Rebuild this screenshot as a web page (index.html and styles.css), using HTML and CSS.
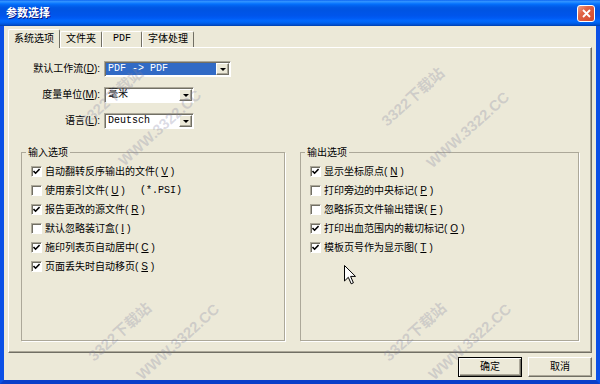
FILE: index.html
```html
<!DOCTYPE html>
<html lang="zh">
<head>
    <meta charset="UTF-8">
    <title>参数选择</title>
    <link rel="stylesheet" href="styles.css">
</head>
<body>
    <div class="window">
        <div class="titlebar">
            <span class="title">参数选择</span>
            <button class="close" title="关闭">
                <svg width="9" height="9" viewBox="0 0 9 9"><path d="M1 1 L8 8 M8 1 L1 8" stroke="#fff" stroke-width="1.8" fill="none"/></svg>
            </button>
        </div>

        <div class="frame">
            <div class="tabs">
                <div class="tab active">系统选项</div>
                <div class="tab">文件夹</div>
                <div class="tab mono">PDF</div>
                <div class="tab">字体处理</div>
            </div>

            <div class="panel">
                <div class="form">
                    <label>默认工作流(<u>D</u>):</label>
                    <div class="combo wide">
                        <span class="value selected">PDF -&gt; PDF</span>
                        <span class="drop"></span>
                    </div>

                    <label>度量单位(<u>M</u>):</label>
                    <div class="combo">
                        <span class="value">毫米</span>
                        <span class="drop"></span>
                    </div>

                    <label>语言(<u>L</u>):</label>
                    <div class="combo">
                        <span class="value">Deutsch</span>
                        <span class="drop"></span>
                    </div>
                </div>

                <div class="groups">
                    <fieldset class="group">
                        <legend>输入选项</legend>
                        <div class="check"><span class="box"><svg width="7" height="7" viewBox="0 0 7 7"><path d="M0.5 3 L2.6 5.2 L6.6 1" stroke="#000" stroke-width="1.6" fill="none"/></svg></span>自动翻转反序输出的文件(<u>V</u>)</div>
                        <div class="check"><span class="box"></span>使用索引文件(<u>U</u>)<span class="mono">&nbsp; (*.PSI)</span></div>
                        <div class="check"><span class="box"><svg width="7" height="7" viewBox="0 0 7 7"><path d="M0.5 3 L2.6 5.2 L6.6 1" stroke="#000" stroke-width="1.6" fill="none"/></svg></span>报告更改的源文件(<u>R</u>)</div>
                        <div class="check"><span class="box"></span>默认忽略装订盒(<u>I</u>)</div>
                        <div class="check"><span class="box"><svg width="7" height="7" viewBox="0 0 7 7"><path d="M0.5 3 L2.6 5.2 L6.6 1" stroke="#000" stroke-width="1.6" fill="none"/></svg></span>施印列表页自动居中(<u>C</u>)</div>
                        <div class="check"><span class="box"><svg width="7" height="7" viewBox="0 0 7 7"><path d="M0.5 3 L2.6 5.2 L6.6 1" stroke="#000" stroke-width="1.6" fill="none"/></svg></span>页面丢失时自动移页(<u>S</u>)</div>
                    </fieldset>

                    <fieldset class="group">
                        <legend>输出选项</legend>
                        <div class="check"><span class="box"><svg width="7" height="7" viewBox="0 0 7 7"><path d="M0.5 3 L2.6 5.2 L6.6 1" stroke="#000" stroke-width="1.6" fill="none"/></svg></span>显示坐标原点(<u>N</u>)</div>
                        <div class="check"><span class="box"></span>打印旁边的中央标记(<u>P</u>)</div>
                        <div class="check"><span class="box"></span>忽略拆页文件输出错误(<u>F</u>)</div>
                        <div class="check"><span class="box"><svg width="7" height="7" viewBox="0 0 7 7"><path d="M0.5 3 L2.6 5.2 L6.6 1" stroke="#000" stroke-width="1.6" fill="none"/></svg></span>打印出血范围内的裁切标记(<u>O</u>)</div>
                        <div class="check"><span class="box"><svg width="7" height="7" viewBox="0 0 7 7"><path d="M0.5 3 L2.6 5.2 L6.6 1" stroke="#000" stroke-width="1.6" fill="none"/></svg></span>模板页号作为显示图(<u>T</u>)</div>
                    </fieldset>
                </div>
            </div>

            <div class="buttons">
                <button class="btn default">确定</button>
                <button class="btn">取消</button>
            </div>
        </div>

        <!-- watermark of the download site, sits over the dialog -->
        <div class="watermarks">
            <span class="wm" style="left:112px; top:97px">3322下载站</span>
            <span class="wm" style="left:160px; top:128px">WWW.3322.CC</span>
            <span class="wm" style="left:413px; top:97px">3322下载站</span>
            <span class="wm" style="left:468px; top:130px">WWW.3322.CC</span>
            <span class="wm" style="left:120px; top:332px">3322下载站</span>
            <span class="wm" style="left:178px; top:342px">WWW.3322.CC</span>
            <span class="wm" style="left:415px; top:332px">3322下载站</span>
            <span class="wm" style="left:470px; top:342px">WWW.3322.CC</span>
        </div>

        <svg class="cursor" width="13" height="20" viewBox="0 0 13 20">
            <path d="M0.5 0.5 L0.5 16 L4.3 12.3 L7.2 18.8 L9.4 17.8 L6.6 11.4 L11.5 11.4 Z" fill="#fff" stroke="#000" stroke-width="1"/>
        </svg>
    </div>
</body>
</html>
```

FILE: styles.css
```css
* {
    margin: 0;
    padding: 0;
    box-sizing: border-box;
}

body {
    width: 600px;
    height: 384px;
    overflow: hidden;
    font-family: "Liberation Sans", "Noto Sans CJK SC", sans-serif;
    font-size: 10px;
    line-height: 12px;
    color: #000;
    background: #fff;
}

.mono {
    font-family: "Liberation Mono", "Noto Sans CJK SC", monospace;
}

.window {
    position: relative;
    width: 600px;
    height: 384px;
    display: flex;
    flex-direction: column;
    overflow: hidden;
}

.titlebar {
    height: 26px;
    display: flex;
    align-items: center;
    justify-content: space-between;
    padding: 0 5px 0 6px;
    background: linear-gradient(to bottom, #0058ee 0%, #3593ff 4%, #288eff 8%, #127dff 12%, #036ffc 16%, #0262ee 22%, #0057e5 30%, #0054e3 40%, #0055eb 60%, #005bf5 70%, #026afe 80%, #0062ef 88%, #0052d6 94%, #0040ab 100%);
}

.title {
    color: #fff;
    font-size: 11px;
    font-weight: bold;
    text-shadow: 1px 1px 0 #0a1883;
}

.close {
    width: 18px;
    height: 17px;
    display: flex;
    align-items: center;
    justify-content: center;
    border: 1px solid #fff;
    border-radius: 3px;
    background: linear-gradient(135deg, #f0a089 0%, #e06446 35%, #d4482c 100%);
}

.frame {
    flex: 1;
    display: flex;
    flex-direction: column;
    background: #ece9d8;
    border: 4px solid #0b50e6;
    border-top: 0;
    border-bottom-color: #0a3fc9;
    padding: 3px 4px;
}

.tabs {
    display: flex;
    align-items: flex-end;
    height: 18px;
}

.tab {
    height: 16px;
    min-width: 40px;
    padding: 0 5px;
    line-height: 14px;
    text-align: center;
    border: 1px solid;
    border-color: #fff #716f64 transparent #fff;
    border-bottom: 0;
    border-radius: 2px 2px 0 0;
}

.tab.active {
    position: relative;
    z-index: 1;
    height: 19px;
    margin-bottom: -1px;
    line-height: 17px;
    background: #ece9d8;
}

.panel {
    flex: 1;
    display: flex;
    flex-direction: column;
    border: 1px solid;
    border-color: #fff #716f64 #716f64 #fff;
    box-shadow: inset -1px -1px 0 #aca899;
    padding: 13px 12px 11px 12px;
}

.form {
    display: grid;
    grid-template-columns: 79px auto;
    column-gap: 4px;
    row-gap: 10px;
    align-items: center;
    justify-items: start;
}

.form label {
    justify-self: end;
    white-space: nowrap;
}

.combo {
    display: flex;
    width: 90px;
    height: 16px;
    padding: 1px;
    border: 1px solid;
    border-color: #aca899 #fff #fff #aca899;
    box-shadow: inset 1px 1px 0 #716f64;
    background: #fff;
}

.combo.wide {
    width: 127px;
}

.value {
    flex: 1;
    padding: 0 2px;
    font-family: "Liberation Mono", "Noto Sans CJK SC", monospace;
    line-height: 12px;
    white-space: nowrap;
}

.value.selected {
    background: #316ac5;
    color: #fff;
}

.drop {
    width: 13px;
    display: flex;
    align-items: center;
    justify-content: center;
    background: #ece9d8;
    border: 1px solid;
    border-color: #fff #716f64 #716f64 #fff;
    box-shadow: inset -1px -1px 0 #aca899;
}

.drop::after {
    content: '';
    border-left: 3px solid transparent;
    border-right: 3px solid transparent;
    border-top: 3px solid #000;
}

.groups {
    flex: 1;
    display: grid;
    grid-template-columns: 264px 1fr;
    column-gap: 15px;
    margin-top: 17px;
}

.group {
    min-width: 0;
    border: 1px solid #aca899;
    box-shadow: 1px 1px 0 #fff;
    padding: 3px 0 0 9px;
}

.group legend {
    margin-left: -5px;
    padding: 0 2px;
    line-height: 13px;
}

.check {
    display: flex;
    align-items: center;
    gap: 3px;
    height: 19px;
    white-space: nowrap;
}

.box {
    width: 11px;
    height: 11px;
    flex: none;
    display: flex;
    align-items: center;
    justify-content: center;
    border: 1px solid;
    border-color: #aca899 #fff #fff #aca899;
    box-shadow: inset 1px 1px 0 #716f64;
    background: #fff;
}

.buttons {
    display: flex;
    justify-content: flex-end;
    gap: 6px;
    margin-top: 4px;
}

.btn {
    width: 64px;
    height: 20px;
    font: inherit;
    color: #000;
    background: #ece9d8;
    border: 1px solid;
    border-color: #fff #716f64 #716f64 #fff;
    box-shadow: inset -1px -1px 0 #aca899;
}

.btn.default {
    border-color: #000;
    box-shadow: inset 1px 1px 0 #fff, inset -1px -1px 0 #716f64, inset -2px -2px 0 #aca899;
}

.watermarks {
    position: absolute;
    inset: 0;
    pointer-events: none;
}

.wm {
    position: absolute;
    transform: translate(-50%, -50%) rotate(-42deg);
    font-family: "Liberation Sans", "Noto Sans CJK SC", sans-serif;
    font-size: 15px;
    font-weight: bold;
    color: rgba(130, 130, 160, 0.28);
    white-space: nowrap;
}

.cursor {
    position: absolute;
    left: 344px;
    top: 265px;
}
```
